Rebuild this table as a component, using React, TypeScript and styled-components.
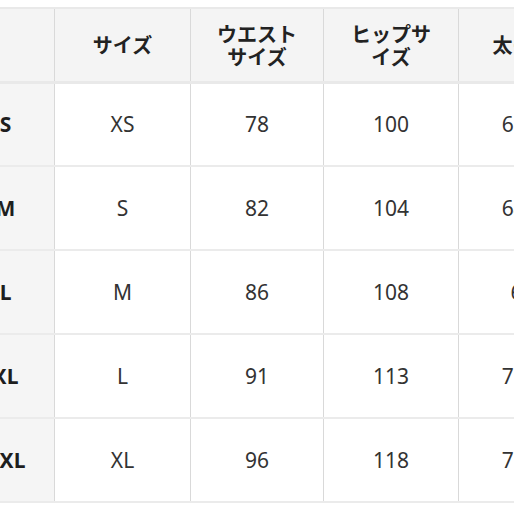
import styled, { createGlobalStyle } from "styled-components";

const GlobalStyle = createGlobalStyle`
  html, body {
    margin: 0;
    padding: 0;
    background: #ffffff;
    overflow: hidden;
  }
  body {
    font-family: "Noto Sans", "Noto Sans CJK JP", sans-serif;
  }
`;

const Page = styled.div`
  width: 514px;
  height: 514px;
  padding-top: 7px;
  box-sizing: border-box;
  overflow: hidden;
`;

const Table = styled.table`
  margin-left: -44px;
  border-collapse: collapse;
  table-layout: fixed;
  width: 630px;
`;

const HeadCell = styled.th<{ $w: number }>`
  width: ${(p) => p.$w}px;
  height: 74px;
  box-sizing: border-box;
  padding: 0 20px;
  background: #f4f4f4;
  color: #222;
  font-family: "Noto Sans CJK JP", "Noto Sans", sans-serif;
  font-weight: 700;
  font-size: 20px;
  line-height: 23px;
  text-align: center;
  vertical-align: middle;
  border-top: 2px solid #e9e9e9;
  border-bottom: 3px solid #e9e9e9;
  border-left: 1px solid #d9d9d9;
  border-right: 1px solid #d9d9d9;
`;

const Cell = styled.td<{ $label?: boolean }>`
  height: 84px;
  box-sizing: border-box;
  padding: 0;
  background: ${(p) => (p.$label ? "#f5f5f5" : "#ffffff")};
  color: ${(p) => (p.$label ? "#1e1e1e" : "#333")};
  font-weight: ${(p) => (p.$label ? 700 : 400)};
  font-size: 21px;
  text-align: center;
  vertical-align: middle;
  border-top: 2px solid #ebebeb;
  border-bottom: 2px solid #ebebeb;
  border-left: 1px solid #d9d9d9;
  border-right: 1px solid #d9d9d9;
`;

const headers = [
  { label: "", w: 98 },
  { label: "サイズ", w: 136 },
  { label: "ウエストサイズ", w: 133 },
  { label: "ヒップサイズ", w: 135 },
  { label: "太もも", w: 128 },
];

const rows = [
  ["S", "XS", "78", "100", "62.5"],
  ["M", "S", "82", "104", "64.5"],
  ["L", "M", "86", "108", "66"],
  ["XL", "L", "91", "113", "70.5"],
  ["XXL", "XL", "96", "118", "73.5"],
];

export default function App() {
  return (
    <>
      <GlobalStyle />
      <Page>
        <Table>
          <thead>
            <tr>
              {headers.map((h, i) => (
                <HeadCell key={i} $w={h.w}>
                  {h.label}
                </HeadCell>
              ))}
            </tr>
          </thead>
          <tbody>
            {rows.map((row, r) => (
              <tr key={r}>
                {row.map((value, c) => (
                  <Cell key={c} $label={c === 0}>
                    {value}
                  </Cell>
                ))}
              </tr>
            ))}
          </tbody>
        </Table>
      </Page>
    </>
  );
}
